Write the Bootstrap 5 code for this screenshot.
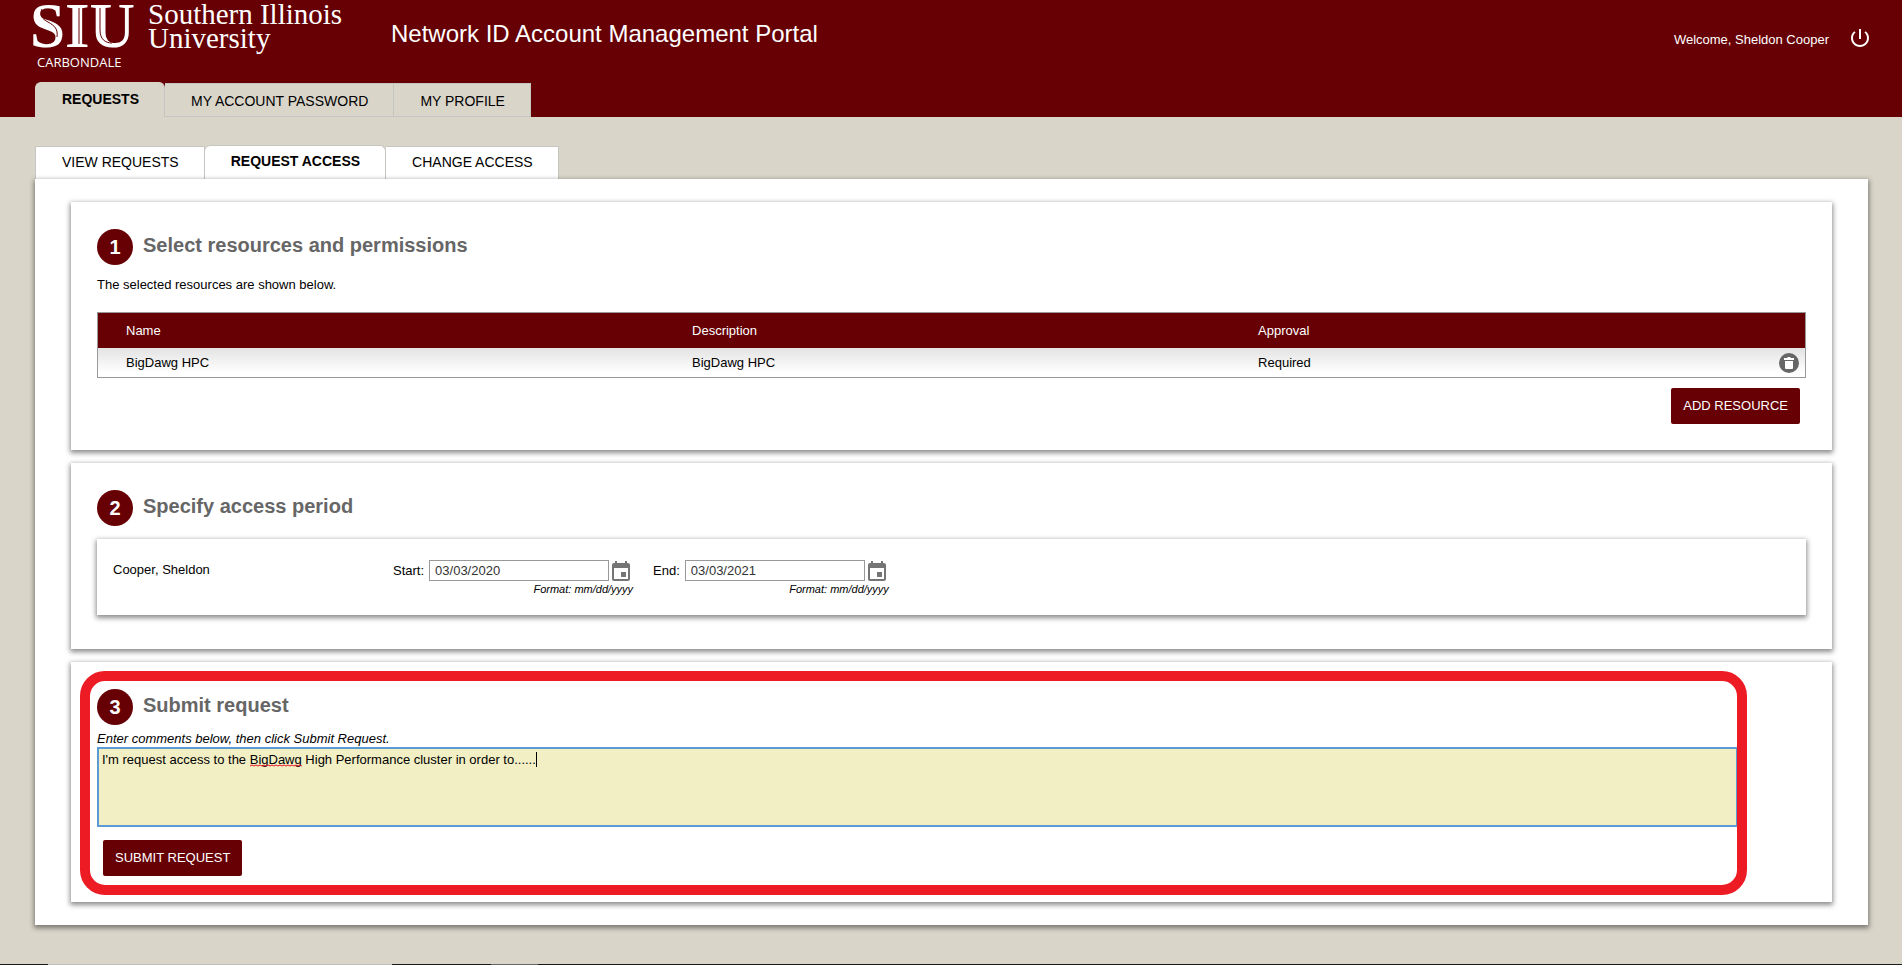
<!DOCTYPE html>
<html lang="en">
<head>
<meta charset="utf-8">
<meta name="viewport" content="width=device-width, initial-scale=1">
<title>Network ID Account Management Portal</title>
<link href="https://cdn.jsdelivr.net/npm/bootstrap@5.3.0/dist/css/bootstrap.min.css" rel="stylesheet">
<style>
:root { --maroon: #660004; --sand: #d9d5c9; --edge: #c6c6c0; }
body { background: var(--sand); color: #000; font: 13px/16px "Liberation Sans", Arial, sans-serif; min-height: 100vh; }
.site-head { background: var(--maroon); color: #fff; }
.logo { width: 312px; height: 72px; margin-left: 32px; overflow: visible; }
.portal-title { font-size: 24px; line-height: 28px; margin: 20px 0 0 47px; }
.who { margin: 29px 33px 0 0; gap: 22px; line-height: 22px; }
.plain { background: none; border: 0; padding: 0; line-height: 0; }
.plain svg { display: block; }

.tab-row { margin: 0 35px; }
.tab-row .nav-link { color: #000; font-size: 14px; line-height: 16px; padding: 9px 25px 7px 26px; border: 1px solid var(--edge); border-left-width: 0; border-radius: 0; }
.tab-row .nav-item:first-child .nav-link { border-left-width: 1px; }
.tab-row .nav-link.active { font-weight: bold; border-radius: 6px 6px 0 0; border-bottom: 0; padding-top: 8px; padding-bottom: 10px; }
.main-tabs { margin-top: 10px; }
.main-tabs .nav-link { background: var(--sand); }
.main-tabs .nav-link.active { border-top-color: var(--sand); border-left-color: var(--sand); }
.sub-tabs { margin-top: 28px; }
.sub-tabs .nav-link { background: #fff; border-bottom: 0; padding-top: 7px; padding-bottom: 9px; }
.sub-tabs .nav-link.active { padding-top: 7px; }

.raised { background: #fff; box-shadow: 0 2px 5px 1px rgba(0,0,0,.45); }
.panel { margin: 0 34px 0 35px; padding: 23px 36px; }
.steps { gap: 13px; }
.step { padding: 27px 26px 26px; }
.step-head { gap: 10px; }
.num { width: 36px; height: 36px; border-radius: 50%; background: var(--maroon); color: #fff; font-size: 20px; line-height: 36px; font-weight: bold; }
.step h2 { font-size: 20px; line-height: 32px; font-weight: bold; color: #666; margin: 0; }
.hint { margin: 12px 0 19px; }
.res-table { border: 1px solid #999; border-collapse: separate; border-spacing: 0; table-layout: fixed; }
.res-table th { background: var(--maroon); color: #fff; font-weight: 500; height: 35px; padding: 0 6px 0 28px; }
.res-table td { height: 29px; padding: 0 6px 0 28px; }
.res-table tbody { background: linear-gradient(#e3e3e3, #fff 85%); }
.res-table .wide { width: 33.16%; }
.act { background: var(--maroon); color: #fff; border: 0; border-radius: 2px; line-height: 16px; padding: 10px 12px; }
.act:hover { background: #800005; color: #fff; }
.add-row { margin: 10px 6px 0 0; }

.period { margin: 13px 0 8px; padding: 21px 16px 17px; gap: 20px; }
.person { width: 260px; padding-top: 2px; }
.date-row { gap: 3px; }
.date-row label { padding-right: 2px; }
.date-row .plain { padding-right: 3px; }
.date-row input { width: 180px; height: 21px; border: 1px solid #999; padding: 0 5px; color: #333; }
.fmt { font-size: 11px; line-height: 17px; }

.ring { left: 9px; right: 85px; top: 9px; bottom: 7px; border: 10px solid #ed1c24; border-radius: 25px; pointer-events: none; }
.note-label { margin-top: 6px; }
.note-box { width: calc(100% - 68px); margin-bottom: 13px; }
.note-box textarea { height: 80px; border: 2px solid #5b9bd5; background: #f2efc5; color: #000; padding: 3px; resize: none; }
.note-box textarea:focus { outline: 0; }
.squiggle { left: 153px; top: 17px; }
.caret { left: 439px; top: 5px; width: 1px; height: 15px; background: #000; }
.submit-row { margin-left: 6px; }
.taskbar { height: 1px; background: linear-gradient(to right, #1b1b1b 48px, #c0c0c0 48px 392px, #1b1b1b 392px 491px, #666 491px 538px, #1b1b1b 538px); }
</style>
</head>
<body class="d-flex flex-column">
<header class="site-head">
  <div class="d-flex align-items-start">
    <svg class="logo" viewBox="0 0 312 72" role="img" aria-label="SIU Southern Illinois University Carbondale" fill="#fff" font-family="Liberation Serif, serif">
      <text x="-2" y="47" font-size="63" font-weight="bold">SIU</text>
      <g fill="none" stroke="#660004" stroke-width="1">
        <path d="M10 9c-3 6 0 10 6 13 7 4 10 7 9 15M47 8v36M68 8v22c0 9 5 13 12 13"/>
      </g>
      <text x="116" y="24" font-size="29">Southern Illinois</text>
      <text x="116" y="48" font-size="29">University</text>
      <text x="5" y="67" font-size="13" font-family="Open Sans, sans-serif">CARBONDALE</text>
    </svg>
    <h1 class="portal-title fw-normal mb-0">Network ID Account Management Portal</h1>
    <div class="who d-flex align-items-start ms-auto">
      <span>Welcome, Sheldon Cooper</span>
      <button class="plain" type="button" aria-label="Sign out"><svg width="18" height="18" viewBox="3 3 18 18" fill="#fff"><path d="M13 3h-2v10h2V3zm4.83 2.17l-1.42 1.42C17.99 7.86 19 9.81 19 12c0 3.87-3.13 7-7 7s-7-3.13-7-7c0-2.19 1.01-4.14 2.58-5.42L6.17 5.17C4.23 6.82 3 9.26 3 12c0 4.97 4.03 9 9 9s9-4.03 9-9c0-2.74-1.23-5.18-3.17-6.83z"/></svg></button>
    </div>
  </div>
  <ul class="nav tab-row main-tabs align-items-end">
    <li class="nav-item"><a class="nav-link active" href="#">REQUESTS</a></li>
    <li class="nav-item"><a class="nav-link" href="#">MY ACCOUNT PASSWORD</a></li>
    <li class="nav-item"><a class="nav-link" href="#">MY PROFILE</a></li>
  </ul>
</header>

<ul class="nav tab-row sub-tabs align-items-end">
  <li class="nav-item"><a class="nav-link" href="#">VIEW REQUESTS</a></li>
  <li class="nav-item"><a class="nav-link active" href="#">REQUEST ACCESS</a></li>
  <li class="nav-item"><a class="nav-link" href="#">CHANGE ACCESS</a></li>
</ul>

<main class="panel raised">
  <div class="steps d-flex flex-column">
    <section class="raised step">
      <div class="step-head d-flex"><span class="num text-center">1</span><h2>Select resources and permissions</h2></div>
      <p class="hint">The selected resources are shown below.</p>
      <table class="res-table w-100">
        <thead><tr><th class="wide">Name</th><th class="wide">Description</th><th>Approval</th></tr></thead>
        <tbody><tr>
          <td>BigDawg HPC</td>
          <td>BigDawg HPC</td>
          <td><div class="d-flex justify-content-between align-items-center">Required
            <button class="plain" type="button" aria-label="Remove BigDawg HPC"><svg width="20" height="20" viewBox="0 0 20 20"><circle cx="10" cy="10" r="10" fill="#666"/><path d="M5 5h3l1-1h2l1 1h3v2H5zM6 8h8v7q0 1-1 1H7q-1 0-1-1z" fill="#fff"/></svg></button></div></td>
        </tr></tbody>
      </table>
      <div class="add-row d-flex justify-content-end"><button class="act" type="button">ADD RESOURCE</button></div>
    </section>

    <section class="raised step">
      <div class="step-head d-flex"><span class="num text-center">2</span><h2>Specify access period</h2></div>
      <div class="period raised d-flex">
        <div class="person">Cooper, Sheldon</div>
        <div>
          <div class="date-row d-flex align-items-center">
            <label for="start">Start:</label>
            <input id="start" type="text" value="03/03/2020">
            <button class="plain" type="button" aria-label="Pick start date"><svg width="18" height="20" viewBox="3 1 18 20" fill="#757575"><path d="M17 12h-5v5h5v-5zM16 1v2H8V1H6v2H5c-1.11 0-1.99.9-1.99 2L3 19c0 1.1.89 2 2 2h14c1.1 0 2-.9 2-2V5c0-1.1-.9-2-2-2h-1V1h-2zm3 18H5V8h14v11z"/></svg></button>
          </div>
          <div class="fmt fst-italic text-end">Format: mm/dd/yyyy</div>
        </div>
        <div>
          <div class="date-row d-flex align-items-center">
            <label for="end">End:</label>
            <input id="end" type="text" value="03/03/2021">
            <button class="plain" type="button" aria-label="Pick end date"><svg width="18" height="20" viewBox="3 1 18 20" fill="#757575"><path d="M17 12h-5v5h5v-5zM16 1v2H8V1H6v2H5c-1.11 0-1.99.9-1.99 2L3 19c0 1.1.89 2 2 2h14c1.1 0 2-.9 2-2V5c0-1.1-.9-2-2-2h-1V1h-2zm3 18H5V8h14v11z"/></svg></button>
          </div>
          <div class="fmt fst-italic text-end">Format: mm/dd/yyyy</div>
        </div>
      </div>
    </section>

    <section class="raised step position-relative">
      <div class="step-head d-flex"><span class="num text-center">3</span><h2>Submit request</h2></div>
      <label class="note-label d-block fst-italic" for="notes">Enter comments below, then click Submit Request.</label>
      <div class="note-box position-relative">
        <textarea id="notes" class="d-block w-100" spellcheck="false">I'm request access to the BigDawg High Performance cluster in order to......</textarea>
        <svg class="squiggle position-absolute" width="52" height="3" viewBox="0 0 52 3" fill="none" stroke="#e81123" aria-hidden="true"><path d="M0 2l2-1 2 1 2-1 2 1 2-1 2 1 2-1 2 1 2-1 2 1 2-1 2 1 2-1 2 1 2-1 2 1 2-1 2 1 2-1 2 1 2-1 2 1 2-1 2 1 2-1 2 1"/></svg>
        <span class="caret position-absolute"></span>
      </div>
      <div class="submit-row d-flex"><button class="act" type="submit">SUBMIT REQUEST</button></div>
      <div class="ring position-absolute"></div>
    </section>
  </div>
</main>
<div class="taskbar mt-auto"></div>
<script src="https://cdn.jsdelivr.net/npm/bootstrap@5.3.0/dist/js/bootstrap.bundle.min.js"></script>
</body>
</html>
